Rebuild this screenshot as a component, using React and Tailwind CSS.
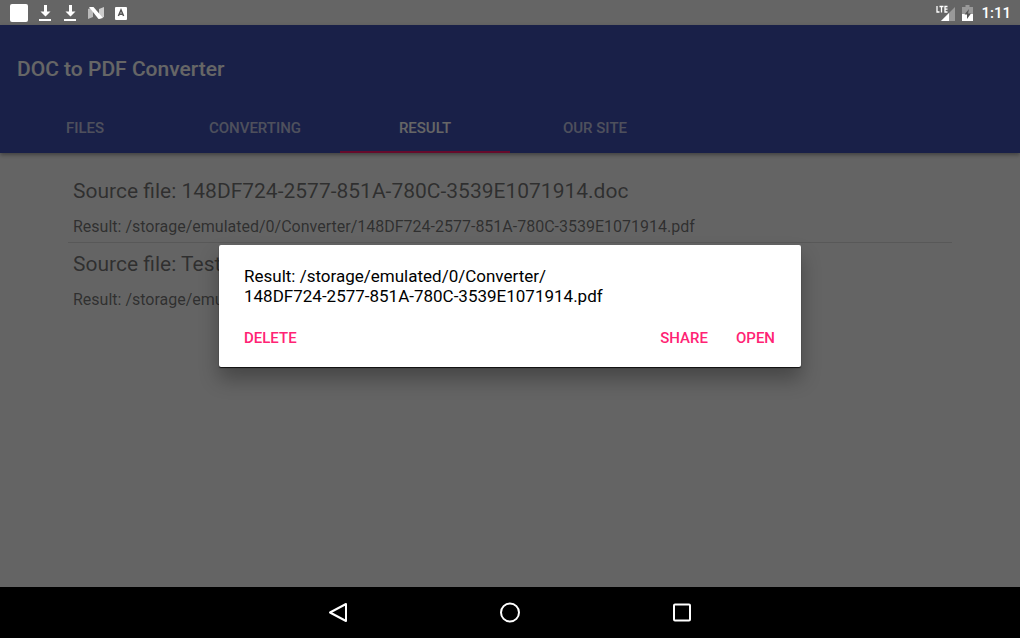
import { useState } from "react";

const tabs = ["Files", "Converting", "Result", "Our site"];

const files = [
    {
        source: "148DF724-2577-851A-780C-3539E1071914.doc",
        folder: "/storage/emulated/0/Converter/",
        result: "148DF724-2577-851A-780C-3539E1071914.pdf",
    },
    {
        source: "Test.doc",
        folder: "/storage/emulated/0/Converter/",
        result: "Test.pdf",
    },
];

function DownloadIcon() {
    return (
        <svg width="15" height="18" viewBox="0 0 15 18" fill="#fff">
            <path d="M6 1h3v6.500h3.500L7.500 12.500l-5-5H6z" />
            <path d="M1 15h12v2H1z" />
        </svg>
    );
}

function StatusBar() {
    return (
        <div className="flex h-[25px] items-center justify-between bg-[#656565] pl-[10px] pr-[9px]">
            <div className="flex items-center gap-[10px]">
                <div className="h-[18px] w-[18px] rounded-xs bg-white" />
                <DownloadIcon />
                <DownloadIcon />
                <svg width="16" height="14" viewBox="0 0 16 14">
                    <path d="M0 3l5-2v10l-5 2z" fill="#bbb" />
                    <path d="M11 3l5-2v10l-5 2z" fill="#ccc" />
                    <path d="M1 1h4.500l9.500 11-4.500 1z" fill="#fff" />
                </svg>
                <svg width="13" height="14" viewBox="0 0 13 14">
                    <rect width="12" height="13" x="1" y="1" rx="1" fill="#fff" />
                    <path
                        d="M4.400 10L7 4l2.600 6M5.200 8.300h3.600"
                        fill="none"
                        stroke="#555"
                        strokeWidth="1.500"
                    />
                </svg>
            </div>
            <div className="flex items-center text-white">
                <svg className="mr-[6px]" width="20" height="18" viewBox="0 0 20 18">
                    <path d="M19 3v14H5z" fill="#999" />
                    <path d="M13 9v8H5z" fill="#fff" />
                    <path
                        d="M1 2v6h2.500M3.500 2.500h4M5.500 2.500V8.500M11.500 2.500H9V8H11.500M9 5.200H11.500"
                        fill="none"
                        stroke="#fff"
                        strokeWidth="1.300"
                    />
                </svg>
                <svg className="mr-2" width="11" height="16" viewBox="0 0 11 16">
                    <path d="M3.500 0h4v2H11v7H0V2h3.500z" fill="#999" />
                    <path d="M0 9h11v7H0z" fill="#fff" />
                    <path d="M7 4L2.500 9.500H5V14l4-5.500H6z" fill="#555" />
                </svg>
                <span className="text-[15px] leading-5 font-medium">1:11</span>
            </div>
        </div>
    );
}

function NavigationBar() {
    return (
        <nav className="flex h-[51px] items-center justify-center gap-[148px] bg-black">
            <button type="button" aria-label="Back">
                <svg width="24" height="24" viewBox="0 0 24 24" fill="none" stroke="#fff" strokeWidth="2">
                    <path d="M20 3v17L4 11.500z" strokeLinejoin="round" />
                </svg>
            </button>
            <button type="button" aria-label="Home">
                <svg width="24" height="24" viewBox="0 0 24 24" fill="none" stroke="#fff" strokeWidth="2">
                    <circle cx="12" cy="11.500" r="9" />
                </svg>
            </button>
            <button type="button" aria-label="Recent apps">
                <svg width="24" height="24" viewBox="0 0 24 24" fill="none" stroke="#fff" strokeWidth="2">
                    <rect x="4" y="3.500" width="16" height="16" rx="1" />
                </svg>
            </button>
        </nav>
    );
}

function ResultDialog({ file, onClose }) {
    return (
        <div className="absolute inset-0 z-10 flex items-center justify-center bg-black/60 px-6">
            <div
                role="dialog"
                aria-modal="true"
                className="w-full max-w-[582px] rounded-xs bg-white pt-[21px] pb-[10px] shadow-[0_1px_1px_rgba(0,0,0,0.8),0_12px_20px_rgba(0,0,0,0.3)]"
            >
                <p className="px-[25px] text-[17px] leading-5 text-black">
                    Result: {file.folder}
                    <br />
                    {file.result}
                </p>
                <div className="mt-[14px] flex justify-between pr-[18px] pl-[17px] text-[15px] font-medium text-[#ff2374]">
                    <button type="button" className="h-[37px] px-2" onClick={onClose}>
                        DELETE
                    </button>
                    <div className="flex gap-3">
                        <button type="button" className="h-[37px] px-2" onClick={onClose}>
                            SHARE
                        </button>
                        <button type="button" className="h-[37px] px-2" onClick={onClose}>
                            OPEN
                        </button>
                    </div>
                </div>
            </div>
        </div>
    );
}

export default function App() {
    const [activeTab, setActiveTab] = useState("Result");
    const [selected, setSelected] = useState(files[0]);

    return (
        <div className="flex min-h-screen flex-col font-[Roboto,sans-serif]">
            <StatusBar />
            <div className="relative flex grow flex-col bg-[#fafafa]">
                <header className="bg-[#3f51b5] text-white shadow-[0_2px_4px_rgba(0,0,0,0.35)]">
                    <h1 className="px-[17px] pt-[30px] pb-5 text-[21px] leading-7 font-medium">
                        DOC to PDF Converter
                    </h1>
                    <div role="tablist" className="flex">
                        {tabs.map((tab) => (
                            <button
                                key={tab}
                                type="button"
                                role="tab"
                                aria-selected={tab === activeTab}
                                onClick={() => setActiveTab(tab)}
                                className={`h-[50px] w-[170px] border-b-2 pt-[3px] text-[15px] font-medium uppercase ${
                                    tab === activeTab
                                        ? "border-[#ff1a6c] text-white"
                                        : "border-transparent text-white/70"
                                }`}
                            >
                                {tab}
                            </button>
                        ))}
                    </div>
                </header>
                <ul className="mx-[68px] divide-y divide-black/12 pt-[17px] text-black/54">
                    {files.map((file) => (
                        <li key={file.source}>
                            <button
                                type="button"
                                className="block w-full px-[5px] pt-[7px] pb-[5px] text-left"
                                onClick={() => setSelected(file)}
                            >
                                <span className="block text-[21px] leading-7">
                                    Source file: {file.source}
                                </span>
                                <span className="mt-3 block text-[16px] leading-5">
                                    Result: {file.folder}
                                    {file.result}
                                </span>
                            </button>
                        </li>
                    ))}
                </ul>
                {selected && (
                    <ResultDialog file={selected} onClose={() => setSelected(null)} />
                )}
            </div>
            <NavigationBar />
        </div>
    );
}
